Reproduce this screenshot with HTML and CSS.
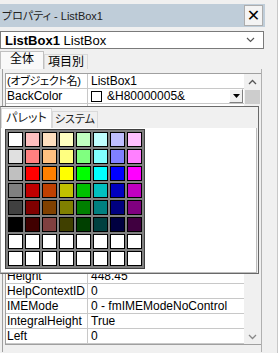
FILE: index.html
```html
<!DOCTYPE html>
<html lang="ja">
<head>
    <meta charset="UTF-8">
    <title>プロパティ - ListBox1</title>
    <link rel="stylesheet" href="styles.css">
</head>
<body>
    <div class="window">
        <div class="titlebar">
            <span class="title">プロパティ - ListBox1</span>
            <span class="close">✕</span>
        </div>
        <div class="combo">
            <span><b>ListBox1</b> ListBox</span>
            <svg class="chev" width="9" height="6" viewBox="0 0 9 6"><path d="M1 1 L4.5 4.5 L8 1" fill="none" stroke="#555" stroke-width="1.2"/></svg>
        </div>
        <div class="tabs">
            <span class="tab active">全体</span>
            <span class="tab">項目別</span>
        </div>
        <div class="page">
            <div class="grid">
                <div class="rows">
                    <div class="row"><span class="name jp">(オブジェクト名)</span><span class="val">ListBox1</span></div>
                    <div class="row"><span class="name">BackColor</span><span class="val sel"><i class="swatch"></i>&amp;H80000005&amp;<span class="drop"><svg width="7" height="4" viewBox="0 0 7 4"><path d="M0 0 H7 L3.5 4 Z" fill="#000"/></svg></span></span></div>
                    <div class="row"><span class="name">BorderColor</span><span class="val">&amp;H80000006&amp;</span></div>
                    <div class="row"><span class="name">BorderStyle</span><span class="val">0 - fmBorderStyleNone</span></div>
                    <div class="row"><span class="name">BoundColumn</span><span class="val">1</span></div>
                    <div class="row"><span class="name">ColumnCount</span><span class="val">1</span></div>
                    <div class="row"><span class="name">ColumnHeads</span><span class="val">False</span></div>
                    <div class="row"><span class="name">ColumnWidths</span><span class="val"></span></div>
                    <div class="row"><span class="name">ControlSource</span><span class="val"></span></div>
                    <div class="row"><span class="name">ControlTipText</span><span class="val"></span></div>
                    <div class="row"><span class="name">Enabled</span><span class="val">True</span></div>
                    <div class="row"><span class="name">Font</span><span class="val">MS UI Gothic</span></div>
                    <div class="row"><span class="name">ForeColor</span><span class="val">&amp;H80000008&amp;</span></div>
                    <div class="row"><span class="name">Height</span><span class="val">448.45</span></div>
                    <div class="row"><span class="name">HelpContextID</span><span class="val">0</span></div>
                    <div class="row"><span class="name">IMEMode</span><span class="val">0 - fmIMEModeNoControl</span></div>
                    <div class="row"><span class="name">IntegralHeight</span><span class="val">True</span></div>
                    <div class="row"><span class="name">Left</span><span class="val">0</span></div>
                </div>
                <div class="scrollbar">
                    <svg width="9" height="6" viewBox="0 0 9 6"><path d="M1 5 L4.5 1.5 L8 5" fill="none" stroke="#555" stroke-width="1.3"/></svg>
                    <div class="thumb"></div>
                    <div class="track"></div>
                    <svg width="9" height="6" viewBox="0 0 9 6"><path d="M1 1 L4.5 4.5 L8 1" fill="none" stroke="#888" stroke-width="1.3"/></svg>
                </div>
            </div>
        </div>
        <div class="bottombar"></div>

        <div class="popup">
            <div class="ptabs">
                <span class="ptab active">パレット</span>
                <span class="ptab">システム</span>
            </div>
            <div class="ppanel">
                <div class="palette" id="palette"></div>
            </div>
        </div>
    </div>

    <script>
        const colores = [
            '#ffffff', '#ffc0c0', '#ffe0c0', '#ffffc0', '#c0ffc0', '#c0ffff', '#c0c0ff', '#ffc0ff',
            '#e0e0e0', '#ff8080', '#ffc080', '#ffff80', '#80ff80', '#80ffff', '#8080ff', '#ff80ff',
            '#c0c0c0', '#ff0000', '#ff8000', '#ffff00', '#00ff00', '#00ffff', '#0000ff', '#ff00ff',
            '#808080', '#c00000', '#c04000', '#c0c000', '#00c000', '#00c0c0', '#0000c0', '#c000c0',
            '#404040', '#800000', '#804000', '#808000', '#008000', '#008080', '#000080', '#800080',
            '#000000', '#400000', '#804040', '#404000', '#004000', '#004040', '#000040', '#400040'
        ];
        const paleta = document.getElementById('palette');
        for (let i = 0; i < 64; i++) {
            const c = document.createElement('span');
            c.className = 'cell';
            c.style.background = colores[i] || '#ffffff';
            paleta.appendChild(c);
        }
    </script>
</body>
</html>
```

FILE: styles.css
```css
* {
    margin: 0;
    padding: 0;
    box-sizing: border-box;
}
body {
    font-family: "Liberation Sans", "Noto Sans CJK JP", sans-serif;
    font-size: 12px;
    font-feature-settings: "palt";
    color: #000;
    background-color: #f0f0f0;
}
.window {
    position: relative;
    width: 278px;
    height: 353px;
    overflow: hidden;
    border-right: 1px solid #c8c8c8;
}
.titlebar {
    margin-top: 4px;
    width: 265px;
    height: 23px;
    background-color: #bfcdd9;
    display: flex;
    align-items: center;
    justify-content: space-between;
    padding-left: 2px;
    padding-right: 2px;
}
.title {
    font-size: 11px;
    line-height: 14px;
    color: #222;
}
.close {
    width: 19px;
    height: 21px;
    background-color: #f4f4f4;
    border: 1px solid #adadad;
    display: flex;
    align-items: center;
    justify-content: center;
    font-size: 16px;
    font-weight: bold;
    font-family: "DejaVu Sans", sans-serif;
}
.combo {
    margin-top: 4px;
    width: 264px;
    height: 18px;
    background-color: #fff;
    border: 1px solid #7a7a7a;
    display: flex;
    align-items: center;
    justify-content: space-between;
    padding: 0 8px 0 4px;
    font-size: 13px;
}
.tabs {
    display: flex;
    align-items: flex-end;
    height: 19px;
    margin-top: 1px;
}
.tab {
    height: 15px;
    width: 44px;
    text-align: center;
    border: 1px solid #d9d9d9;
    border-bottom: none;
    background-color: #f0f0f0;
    line-height: 14px;
    font-size: 12px;
}
.tab.active {
    height: 18px;
    background-color: #f9f9f9;
    border-color: #c0c0c0;
}
.page {
    height: 283px;
    padding: 4px 0 0 2px;
    border-left: 1px solid #a0a0a0;
    margin-left: 2px;
    width: 260px;
    border-right: 1px solid #b0b0b0;
}
.grid {
    display: flex;
    height: 272px;
    border: 1px solid #a0a0a0;
    border-right: none;
    background-color: #fff;
    overflow: hidden;
}
.rows {
    width: 238px;
    flex: none;
}
.row {
    display: flex;
    height: 15px;
    border-bottom: 1px solid #c8c8c8;
    line-height: 14px;
}
.name {
    width: 82px;
    flex: none;
    padding-left: 1px;
    border-right: 1px solid #c8c8c8;
    white-space: nowrap;
    overflow: hidden;
}
.name.jp {
    font-size: 11px;
    letter-spacing: -0.3px;
}
.val {
    flex: 1;
    padding-left: 3px;
    display: flex;
    align-items: center;
    white-space: nowrap;
}
.swatch {
    width: 11px;
    height: 11px;
    border: 1px solid #000;
    background-color: #fff;
    margin-right: 5px;
}
.drop {
    margin-left: auto;
    width: 14px;
    height: 14px;
    background-color: #f0f0f0;
    border: 1px solid #fff;
    border-right-color: #808080;
    border-bottom-color: #808080;
    display: flex;
    align-items: center;
    justify-content: center;
    margin-right: 1px;
}
.scrollbar {
    width: 17px;
    flex: none;
    background-color: #f0f0f0;
    display: flex;
    flex-direction: column;
    align-items: center;
    padding: 5px 0 4px;
}
.thumb {
    width: 15px;
    height: 14px;
    background-color: #cdcdcd;
    margin-top: 5px;
}
.track {
    flex: 1;
}
.bottombar {
    width: 48px;
    height: 3px;
    background-color: #404040;
    margin-top: 3px;
}
.popup {
    position: absolute;
    left: 0;
    top: 106px;
    width: 259px;
    height: 168px;
    background-color: #f0f0f0;
    border: 1px solid #696969;
    border-left-color: #a0a0a0;
}
.ptabs {
    display: flex;
    align-items: flex-end;
    height: 21px;
}
.ptab {
    width: 46px;
    height: 17px;
    border: 1px solid #d9d9d9;
    border-bottom: none;
    text-align: center;
    line-height: 15px;
    font-size: 11px;
    color: #222;
    white-space: nowrap;
}
.ptab.active {
    width: 51px;
    height: 20px;
    background-color: #fff;
    font-size: 12px;
    line-height: 18px;
}
.ppanel {
    width: 256px;
    height: 145px;
    background-color: #fff;
    border-right: 1px solid #bdbdbd;
    border-bottom: 1px solid #bdbdbd;
    padding: 1px 0 0 4px;
}
.palette {
    display: grid;
    grid-template-columns: repeat(8, 15px);
    grid-auto-rows: 15px;
    gap: 2px;
    width: 140px;
    padding: 2px;
    background-color: #808080;
    border: 1px solid #404040;
}
.cell {
    border: 1px solid #000;
}
```
